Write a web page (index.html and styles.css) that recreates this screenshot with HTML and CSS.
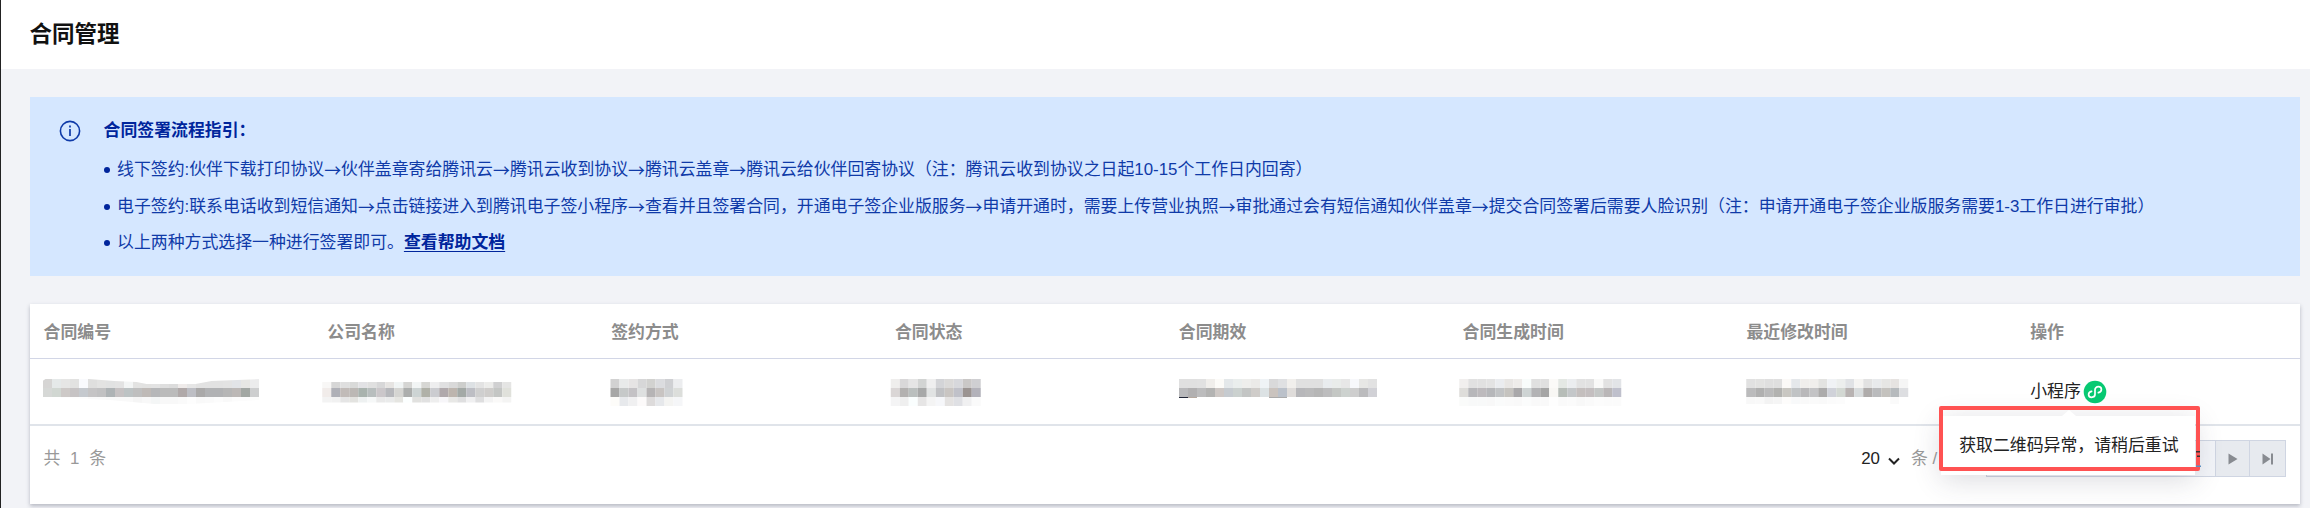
FILE: index.html
```html
<!DOCTYPE html>
<html lang="zh-CN">
  <head>
    <meta charset="UTF-8" />
    <title>合同管理</title>
    <link rel="stylesheet" href="styles.css">
  </head>
  <body>
    <header class="header">
      <h1>合同管理</h1>
    </header>

    <main class="content">
      <section class="guide">
        <svg class="guide-icon" viewBox="0 0 22 22" fill="none" stroke="#0f3aa8">
          <circle cx="11" cy="11" r="9.6" stroke-width="1.6" />
          <path d="M11 9v7M11 5.6v2" stroke-width="1.7" />
        </svg>
        <div class="guide-text">
          <h2>合同签署流程指引：</h2>
          <ul>
            <li>线下签约:伙伴下载打印协议<i>→</i>伙伴盖章寄给腾讯云<i>→</i>腾讯云收到协议<i>→</i>腾讯云盖章<i>→</i>腾讯云给伙伴回寄协议（注：腾讯云收到协议之日起10-15个工作日内回寄）</li>
            <li>电子签约:联系电话收到短信通知<i>→</i>点击链接进入到腾讯电子签小程序<i>→</i>查看并且签署合同，开通电子签企业版服务<i>→</i>申请开通时，需要上传营业执照<i>→</i>审批通过会有短信通知伙伴盖章<i>→</i>提交合同签署后需要人脸识别（注：申请开通电子签企业版服务需要1-3工作日进行审批）</li>
            <li>以上两种方式选择一种进行签署即可。<a href="#">查看帮助文档</a></li>
          </ul>
        </div>
      </section>

      <section class="card">
        <div class="row head">
          <div>合同编号</div>
          <div>公司名称</div>
          <div>签约方式</div>
          <div>合同状态</div>
          <div>合同期效</div>
          <div>合同生成时间</div>
          <div>最近修改时间</div>
          <div>操作</div>
        </div>
        <div class="row data">
          <div><svg class="mask mask-id" data-mask="id"></svg></div>
          <div><svg class="mask" data-mask="company"></svg></div>
          <div><svg class="mask" data-mask="way"></svg></div>
          <div><svg class="mask" data-mask="status"></svg></div>
          <div><svg class="mask" data-mask="period"></svg></div>
          <div><svg class="mask" data-mask="created"></svg></div>
          <div><svg class="mask" data-mask="updated"></svg></div>
          <div class="action">
            <span>小程序</span>
            <svg class="mini-icon" viewBox="0 0 24 24" fill="none">
              <circle cx="12" cy="12" r="11.3" fill="#07c972" />
              <path d="M8.6 11.3C6.8 11.7 5.6 12.9 5.6 14.5C5.6 16.2 6.9 17.3 8.6 17.3C10.6 17.3 12 16.1 12 14.3V9.7C12 7.9 13.4 6.7 15.4 6.7C17.1 6.7 18.4 7.8 18.4 9.5C18.4 11.1 17.2 12.3 15.4 12.7" stroke="#fff" stroke-width="1.7" stroke-linecap="round" />
            </svg>
            <div class="tip">获取二维码异常，请稍后重试</div>
            <div class="tip-frame"></div>
          </div>
        </div>
        <footer class="footer">
          <span class="total">共 1 条</span>
          <div class="pager">
            <span class="size">20</span>
            <svg class="arrow" viewBox="0 0 12 10" fill="none" stroke="#222" stroke-width="2"><path d="M1 2.5l5 5 5-5" /></svg>
            <span class="unit">条 /</span>
            <div class="pages">
              <button class="page-input"><svg viewBox="0 0 5 16" fill="#333"><path d="M0 0h4v1.5h-4zM1 4.5h3v1.5h-3z" /><path d="M0 14.5h5v1.5h-5z" fill="#5a8fc0" /></svg></button>
              <button><svg viewBox="0 0 12 12" fill="#888b91"><path d="M1.5 .5l9 5.5-9 5.5z" /></svg></button>
              <button><svg viewBox="0 0 12 12" fill="#888b91"><path d="M.5 .5l8 5.5-8 5.5zM9 .5h2v11h-2z" /></svg></button>
            </div>
          </div>
        </footer>
      </section>
    </main>

    <script>
      // mosaic over private values: x offset, row edges, colors of each row
      const masks = {
        id: {
          x: 13,
          y: [5, 14, 23, 30],
          rows: [
            "d6d5d4 e5e9e9 e6e6e5 e2e2e1 f9fafd dfdfde e3e3e2 e1e2e2 e3e3e3 f3f5f5 e3e3e2 e2e2e1 e3e3e3 dfdfdf dcdcdc efebea e6e6e6 e2e2e2 e2e2e2 e2e2e2 e3e3e3 e2e4e7 e7e7e4 ececed",
            "d6d8d6 d1d7d2 cdc9c7 c6c3c4 c5c9ce c5c4c5 c1c1c2 aeb3b5 c6c2c3 bdc3c4 bfbfbf bfbab7 b6b7b9 bbbbbb bbbbbb b0a9a9 bdbec4 aaa9a9 b1b2b4 b1b2b4 b6b6b6 bcb8b6 a2a7a3 cdcecf",
            "fff fff fdfdfd fdfdfd fdfdfd fafafa fafafa f9f9f9 f9f9f9 f9f9f9 f5f5f5 f8f8f8 f4f6f6 f8f8f8 f8f8f8 fafafa fdfdfd f9f9f9 fafafa fcfcfc f9f9f9 fcfcfc fcfcfc fcfcfc"
          ]
        },
        company: {
          x: 9.25,
          y: [8, 14, 23, 28.5],
          rows: [
            "f8f7f6 d6d6d6 dfdfdf d9dad9 e2e2e5 e0e0e0 d7d7d8 e6e4e2 f0f4f4 d5d5d3 f2f5f5 d7d7d4 eeeeef e0e0e1 d9d9d9 cdcecc dde1e4 e3e3e3 ececea d0d0d1 e5e5e4",
            "f1ecea afb0b7 c1bbb8 bcb8b5 a9b3ae b8bebe cbc7ca b7b8bc d5d5d2 acaead cdd4d4 b0b1a8 cbccd0 b0a9ac bdb5ae a3a9a6 bdbec4 cfcfcf cfcdcb c4c6c4 e0e1db",
            "f3f3f3 f1f1f1 e5e5e5 e3e3e0 eef1f1 f6f8f8 e9e9e9 eaebeb e5e5e1 fcffff e1e1df e1e1e1 eeeeee f7f6f9 e8e8e6 dfdfe0 f0f0f1 dededf f3f3f3 faf9f8 f4f4f3"
          ]
        },
        way: {
          x: 13.5,
          y: [5, 14, 23, 32],
          rows: [
            "d2d2d2 e8eaea e6e4e4 d7d7d8 d2d2d0 dbdcdf cfd0d3 ecedef",
            "a7a7a6 c6c9c9 c4c2c5 dee0e0 b6b4b5 c8c4c2 cfd2d4 dcdedb",
            "fdfcf9 e7e9ec f0f0f1 fcfafa dddbdb e6e8eb f4f4f2 f5f6f8"
          ]
        },
        status: {
          x: 9.75,
          y: [5, 14, 23, 32],
          rows: [
            "efeeed d9d8d9 e5e5e5 d2d4d3 efefef d3d4d7 dad9d8 d7d8dc cac8c7 cfcfd2",
            "dad6d6 b3b1b0 babfbe a7a8a8 e1e3e3 c0c1c4 c9c5c2 c0c1c9 9b9492 b3b2ba",
            "f4f4f5 efefef fafefe e6e5e5 f4f4f4 f6f7fa e4e2e1 dfe0e4 f0f0f1 fafafa"
          ]
        },
        period: {
          x: 14,
          y: [5, 14, 23, 24],
          rows: [
            "e0e0e0 e0e0e0 e1e1e1 f0eeeb fcfbf8 e4e8ea eaeeed eeeeec ebeae8 eff3f6 d9d9da dfe0e2 f1efec e0e0e0 e0e0e0 e0e0e0 e9ecee e9ecea e7e7e7 f7f8fb e7e7e5 e2e2e2",
            "b9b9bb b1b0b1 bcbcbd b3b3b2 cec8c5 c6cbd0 cbd1cf c3c5c4 cfccc9 dce2e4 cac3be bbc1ca dfdcda b7b7ba bababb b6b6b6 bdbdbe c4c7c4 cdd2cf cecece bbbbbd d1d1d6",
            "222738 b5a99f fff fff fff fff fff fff fff fff aaa aaa"
          ]
        },
        created: {
          x: 10.25,
          y: [5, 14, 23, 32],
          rows: [
            "f1efee e1e1e1 e1e1e1 e3e3e3 eaecef e8e6e4 eeecea f8fcfb e0e0e0 e0e0e0 fbfaf8 e4e8e4 ebedef e2e2e2 e2e2e2 f9f9f8 e2e2e2 e2e4e7",
            "deddda b7b7ba bdbabd b6b7ba c1c3c5 c5c3bf a9a8aa ced4d4 b3b3b5 a5a5a5 f8f7f4 b7bdb8 c4c7c9 c4bfbe c4bfc0 c4c7c6 bab7b8 bfc0cc",
            "fafbfa f8f9f9 f8f9f9 f8f8f8 fafbfb fafafa f9f9f9 fbfcfc f9f9f9 f9f9f9 fefefe fafafa fbfbfb f8f8f8 fafafa fcfcfc fbfbfb fbfbfb"
          ]
        },
        updated: {
          x: 14.25,
          y: [5, 14, 23, 30],
          rows: [
            "e1e1e1 e2e2e1 dfdfdf dfdfdf fbf9f7 e5e8eb f0eeec f0eeec e3e3e1 f0f2f5 eceeed e0e2e5 f5f4f2 e2e2e2 e8eaec e6e6e4 e6e3e1 f5f5f5",
            "bbbbbc b0b0b0 bababb b2b2b0 c9c7c2 c0c3c5 b9b8ba c3c3c5 acabab d0d2d9 d3d8d3 b8b3b2 d8dcdd afacab babbbd c4c2be b6babd dddee1",
            "f8f8f8 f9f9f9 f3f3f3 f5f5f5 fdfcfb f8f9fa f9f9f9 fafafa f9f9f9 fbfbfb fcfcfc fff fff fff fff fff fafafa fff"
          ]
        }
      };

      document.querySelectorAll(".mask").forEach((svg) => {
        const mask = masks[svg.dataset.mask];
        mask.rows.forEach((row, r) => {
          row.split(" ").forEach((color, i) => {
            const rect = document.createElementNS("http://www.w3.org/2000/svg", "rect");
            rect.setAttribute("x", mask.x + i * 9);
            rect.setAttribute("y", mask.y[r]);
            rect.setAttribute("width", 9);
            rect.setAttribute("height", mask.y[r + 1] - mask.y[r]);
            rect.setAttribute("fill", "#" + color);
            svg.appendChild(rect);
          });
        });
      });
    </script>
  </body>
</html>
```
FILE: styles.css
```css
* {
  box-sizing: border-box;
}
body {
  margin: 0;
  height: 508px;
  overflow: hidden;
  border-left: 1px solid #222;
  background: #f2f3f7;
  color: #222;
  font: 16.885px/24px "Liberation Sans", "Noto Sans CJK SC", sans-serif;
}
h1, h2, ul {
  margin: 0;
  padding: 0;
}

.header {
  height: 69px;
  padding: 0 28.5px;
  background: #fff;
}
.header h1 {
  font-size: 22.5px;
  line-height: 69px;
  color: #111;
}

.content {
  padding: 28px 10px 0 28.5px;
}
.guide {
  display: flex;
  height: 179px;
  padding: 20px 29px;
  background: #d5e7ff;
  color: #0f3aa8;
}
.guide-icon {
  width: 22px;
  height: 22px;
  margin: 3px 23px 0 0;
}
.guide h2 {
  font-size: 16.885px;
  line-height: 28px;
  color: #00259c;
}
.guide ul {
  list-style: none;
  margin-top: 7px;
}
.guide li {
  display: flex;
  align-items: center;
  height: 36.6px;
  white-space: nowrap;
}
.guide li::before {
  content: "";
  width: 6px;
  height: 6px;
  margin-right: 7.5px;
  border-radius: 50%;
  background: #00259c;
}
.guide i {
  font-family: "Noto Sans CJK SC", sans-serif;
  font-style: normal;
}
.guide a {
  color: #00259c;
  font-weight: bold;
  text-underline-offset: 3px;
}

.card {
  height: 200px;
  margin-top: 28px;
  background: #fff;
  box-shadow: 0 2px 4px rgba(54, 58, 80, 0.32);
}
.row {
  display: grid;
  grid-template-columns: repeat(8, 1fr);
}
.row > div {
  padding-left: 14px;
}
.head {
  height: 55px;
  line-height: 57px;
  border-bottom: 1px solid #d2d6e6;
  color: #8c8c8c;
  font-weight: bold;
}
.data {
  height: 67px;
  border-bottom: 2px solid #e0e4ea;
}
.mask {
  display: block;
  width: 260px;
  height: 36px;
  margin-top: 15px;
  margin-left: -14px;
}
.mask-id {
  clip-path: polygon(13px 7px, 16px 5px, 59px 5px, 85px 7px, 107px 8px, 117px 10px, 166px 10px, 182px 7px, 208px 6px, 230px 5px, 230px 26px, 160px 30px, 125px 30px, 80px 26px, 13px 23px);
}
.action {
  position: relative;
  display: flex;
  align-items: center;
}
.mini-icon {
  width: 24px;
  height: 24px;
  margin-left: 2px;
}

/* error tip under the mini program link */
.tip {
  position: absolute;
  left: -75px;
  top: 57px;
  width: 254px;
  height: 59px;
  padding-left: 18px;
  line-height: 59px;
  white-space: nowrap;
  background: #fff;
  box-shadow: 0 5px 28px rgba(54, 58, 80, 0.18);
}
.tip::before {
  content: "";
  position: absolute;
  left: 121px;
  top: -6px;
  border: 7px solid transparent;
  border-top: 0;
  border-bottom: 6px solid #fff;
}
.tip-frame {
  position: absolute;
  left: -77px;
  top: 47px;
  width: 261px;
  height: 65px;
  border: 4px solid #ff5252;
  border-radius: 2px;
}

.footer {
  display: flex;
  align-items: center;
  justify-content: space-between;
  height: 65px;
  padding: 0 14px;
  color: #999;
}
.total {
  word-spacing: 5px;
}
.pager {
  display: flex;
  align-items: center;
}
.size {
  color: #222;
}
.arrow {
  width: 12px;
  height: 10px;
  margin: 4px 11px 0 8px;
}
.unit {
  width: 75px;
  white-space: nowrap;
}
.pages {
  display: flex;
  height: 37px;
  border: 1px solid #cfd5e2;
}
.pages button {
  display: flex;
  align-items: center;
  justify-content: center;
  width: 34px;
  padding: 0;
  border: 0;
  border-right: 1px solid #cfd5e2;
  background: #e7eaef;
}
.pages button:last-child {
  width: 35px;
  border-right: 0;
}
.pages svg {
  width: 12px;
  height: 12px;
}
.pages .page-input {
  width: 229px;
  justify-content: flex-end;
  padding-right: 14px;
  background: #f2f4f8;
}
.page-input svg {
  position: relative;
  z-index: 1;
  width: 5px;
  height: 16px;
}
```
